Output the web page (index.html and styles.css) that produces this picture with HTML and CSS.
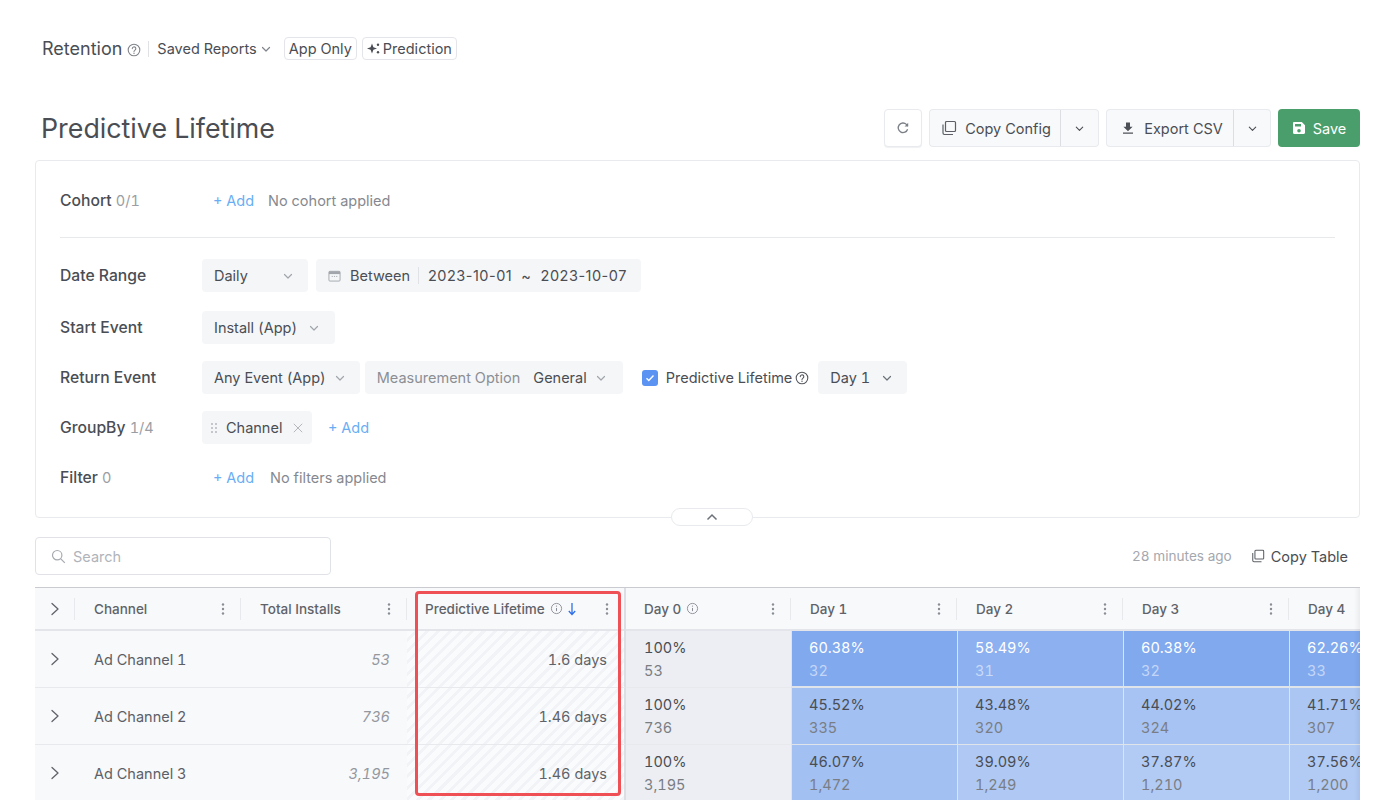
FILE: index.html
```html
<!DOCTYPE html>
<html lang="en">

<head>
    <meta charset="UTF-8">
    <meta name="viewport" content="width=device-width, initial-scale=1.0">
    <title>Predictive Lifetime</title>
    <link rel="stylesheet" href="styles.css">
</head>

<body>
    <svg class="defs" width="0" height="0">
        <symbol id="i-chev" viewBox="0 0 12 12"><path d="M2.5 4.5 6 8l3.5-3.5" fill="none" stroke="currentColor" stroke-width="1.2" stroke-linecap="round" stroke-linejoin="round"/></symbol>
        <symbol id="i-help" viewBox="0 0 14 14"><circle cx="7" cy="7" r="5.8" fill="none" stroke="currentColor" stroke-width="1.1"/><path d="M5.3 5.6a1.75 1.75 0 1 1 2.7 1.5c-.6.4-1 .7-1 1.4" fill="none" stroke="currentColor" stroke-width="1.1" stroke-linecap="round"/><circle cx="7" cy="10.2" r=".7" fill="currentColor"/></symbol>
        <symbol id="i-info" viewBox="0 0 14 14"><circle cx="7" cy="7" r="5.5" fill="none" stroke="currentColor" stroke-width="1"/><path d="M7 6.4v3.4" stroke="currentColor" stroke-width="1.1"/><circle cx="7" cy="4.4" r=".7" fill="currentColor"/></symbol>
        <symbol id="i-copy" viewBox="0 0 16 16"><rect x="4.5" y="1.5" width="10" height="10" rx="1" fill="none" stroke="currentColor" stroke-width="1.2"/><path d="M2 4.5v8.6c0 .8.6 1.4 1.4 1.4H12" fill="none" stroke="currentColor" stroke-width="1.2"/></symbol>
        <symbol id="i-more" viewBox="0 0 4 14"><circle cx="2" cy="2.5" r="1.2" fill="currentColor"/><circle cx="2" cy="7" r="1.2" fill="currentColor"/><circle cx="2" cy="11.5" r="1.2" fill="currentColor"/></symbol>
        <symbol id="i-right" viewBox="0 0 12 14"><path d="M3 1.5 9 7l-6 5.5" fill="none" stroke="currentColor" stroke-width="1.3" stroke-linecap="round" stroke-linejoin="round"/></symbol>
    </svg>

    <div class="topbar">
        <span class="topbar-title">Retention</span>
        <svg class="icon-help"><use href="#i-help"/></svg>
        <span class="topbar-sep"></span>
        <span class="saved">Saved Reports</span>
        <svg class="icon-saved"><use href="#i-chev"/></svg>
        <span class="tag tag-app">App Only</span>
        <span class="tag">
            <svg class="icon-spark" viewBox="0 0 13 13"><path d="M5 1.500 6.400 5.300 10 6.500 6.400 7.800 5 11.500 3.600 7.800 0 6.500 3.600 5.300z" fill="currentColor"/><circle cx="11" cy="2.800" r="1.200" fill="currentColor"/><circle cx="11" cy="10.200" r="1.200" fill="currentColor"/></svg>Prediction
        </span>
    </div>

    <div class="header">
        <h1>Predictive Lifetime</h1>
        <div class="actions">
            <button class="btn btn-refresh">
                <svg width="14" height="14" viewBox="0 0 14 14"><path d="M11.6 8.2A4.8 4.8 0 1 1 10.4 3.4L11.8 5" fill="none" stroke="#7b8087" stroke-width="1.3"/><path d="M12.2 1.8v3.7H8.6z" fill="#7b8087"/></svg>
            </button>
            <div class="btn-group btn-copy">
                <button class="btn btn-main"><svg class="icon-copy"><use href="#i-copy"/></svg>Copy Config</button>
                <button class="btn btn-caret"><svg class="icon-caret"><use href="#i-chev"/></svg></button>
            </div>
            <div class="btn-group btn-export">
                <button class="btn btn-main">
                    <svg class="icon-export" viewBox="0 0 14 14"><path d="M5 1.5h4v4.2h2.6L7 10.2 2.4 5.7H5zM2 11.4h10v1.4H2z" fill="#4d5157"/></svg>Export CSV
                </button>
                <button class="btn btn-caret"><svg class="icon-caret"><use href="#i-chev"/></svg></button>
            </div>
            <button class="btn btn-save">
                <svg class="icon-save" viewBox="0 0 14 14"><path d="M2.2 1h7.6L13 4.2v7.6c0 .7-.5 1.2-1.2 1.2H2.2C1.500 13 1 12.500 1 11.800V2.200C1 1.500 1.500 1 2.200 1zM3 3v2.600h6V3zm4 5.000a1.800 1.800 0 1 0 0 3.600 1.800 1.800 0 0 0 0-3.600z" fill="#fff" fill-rule="evenodd"/></svg>Save
            </button>
        </div>
    </div>

    <div class="panel">
        <div class="row row-cohort">
            <div class="row-label">Cohort <span class="count">0/1</span></div>
            <span class="add">+ Add</span>
            <span class="none">No cohort applied</span>
        </div>
        <div class="divider"></div>
        <div class="row row-date">
            <div class="row-label">Date Range</div>
            <div class="pill pill-daily">Daily<svg class="icon-pill"><use href="#i-chev"/></svg></div>
            <div class="pill pill-date">
                <svg class="icon-cal" viewBox="0 0 14 14"><path d="M2 2.500h10c.6 0 1 .4 1 1V12c0 .6-.4 1-1 1H2c-.6 0-1-.4-1-1V3.500c0-.6.4-1 1-1z" fill="none" stroke="#a2a6ac" stroke-width="1"/><path d="M1 2.500h12v3H1z" fill="#a2a6ac"/><path d="M4 8h1.200M6.400 8h1.200M8.800 8H10" stroke="#a2a6ac"/></svg>
                <span class="date-mode">Between</span>
                <span class="date-value">2023-10-01 &nbsp;~&nbsp; 2023-10-07</span>
            </div>
        </div>
        <div class="row">
            <div class="row-label">Start Event</div>
            <div class="pill pill-start">Install (App)<svg class="icon-pill"><use href="#i-chev"/></svg></div>
        </div>
        <div class="row">
            <div class="row-label">Return Event</div>
            <div class="pill">Any Event (App)<svg class="icon-pill"><use href="#i-chev"/></svg></div>
            <div class="pill pill-measure"><span class="muted">Measurement Option</span>General<svg class="icon-pill"><use href="#i-chev"/></svg></div>
            <span class="check">
                <svg width="10" height="8" viewBox="0 0 10 8"><path d="M1.500 4.200 3.800 6.400 8.500 1.500" fill="none" stroke="#fff" stroke-width="1.400"/></svg>
            </span>
            <span class="check-label">Predictive Lifetime</span>
            <svg class="icon-help-dark"><use href="#i-help"/></svg>
            <div class="pill pill-day">Day 1<svg class="icon-pill icon-dark"><use href="#i-chev"/></svg></div>
        </div>
        <div class="row">
            <div class="row-label">GroupBy <span class="count">1/4</span></div>
            <div class="pill pill-group">
                <svg class="icon-drag" viewBox="0 0 6 10"><g fill="#c4c8cd"><rect width="2" height="2"/><rect x="4" width="2" height="2"/><rect y="4" width="2" height="2"/><rect x="4" y="4" width="2" height="2"/><rect y="8" width="2" height="2"/><rect x="4" y="8" width="2" height="2"/></g></svg>
                Channel
                <svg class="icon-x" viewBox="0 0 10 10"><path d="M.8.8l8.400 8.400M9.200.8.800 9.200" stroke="#b4b8bd" stroke-width="1"/></svg>
            </div>
            <span class="add add-group">+ Add</span>
        </div>
        <div class="row">
            <div class="row-label">Filter <span class="count">0</span></div>
            <span class="add">+ Add</span>
            <span class="none none-filter">No filters applied</span>
        </div>
        <button class="collapse">
            <svg width="12" height="8" viewBox="0 0 12 8"><path d="M1.500 6.500 6 2l4.500 4.500" fill="none" stroke="#6d7278" stroke-width="1.500"/></svg>
        </button>
    </div>

    <div class="toolbar">
        <div class="search">
            <svg width="15" height="15" viewBox="0 0 15 15"><circle cx="6.200" cy="6.200" r="4.700" fill="none" stroke="#a6aab0" stroke-width="1.200"/><path d="m9.800 9.800 4 4" stroke="#a6aab0" stroke-width="1.200"/></svg>
            Search
        </div>
        <div class="toolbar-right">
            <span class="ago">28 minutes ago</span>
            <svg class="icon-copy-sm"><use href="#i-copy"/></svg>
            <span class="copy-table">Copy Table</span>
        </div>
    </div>

    <div class="table">
        <div class="table-row table-head">
            <div class="th th-expand"><svg class="icon-right"><use href="#i-right"/></svg></div>
            <div class="th">Channel<svg class="icon-more"><use href="#i-more"/></svg></div>
            <div class="th">Total Installs<svg class="icon-more"><use href="#i-more"/></svg></div>
            <div class="th th-pl">Predictive Lifetime<svg class="icon-info"><use href="#i-info"/></svg>
                <svg class="icon-sort" viewBox="0 0 10 14"><path d="M5 1v11M1.800 9 5 12.500 8.200 9" fill="none" stroke="#2f6fe8" stroke-width="1.300"/></svg>
                <svg class="icon-more"><use href="#i-more"/></svg></div>
            <div class="th th-day">Day 0<svg class="icon-info"><use href="#i-info"/></svg><svg class="icon-more"><use href="#i-more"/></svg></div>
            <div class="th">Day 1<svg class="icon-more"><use href="#i-more"/></svg></div>
            <div class="th">Day 2<svg class="icon-more"><use href="#i-more"/></svg></div>
            <div class="th">Day 3<svg class="icon-more"><use href="#i-more"/></svg></div>
            <div class="th th-last">Day 4</div>
        </div>

        <div class="table-row">
            <div class="td td-expand"><svg class="icon-right"><use href="#i-right"/></svg></div>
            <div class="td td-name">Ad Channel 1</div>
            <div class="td td-total">53</div>
            <div class="td td-pl">1.6 days</div>
            <div class="td td-zero">100%<small>53</small></div>
            <div class="td heat heat-a">60.38%<small>32</small></div>
            <div class="td heat heat-b">58.49%<small>31</small></div>
            <div class="td heat heat-a">60.38%<small>32</small></div>
            <div class="td heat heat-a">62.26%<small>33</small></div>
        </div>
        <div class="table-row">
            <div class="td td-expand"><svg class="icon-right"><use href="#i-right"/></svg></div>
            <div class="td td-name">Ad Channel 2</div>
            <div class="td td-total">736</div>
            <div class="td td-pl">1.46 days</div>
            <div class="td td-zero">100%<small>736</small></div>
            <div class="td heat heat-c">45.52%<small>335</small></div>
            <div class="td heat heat-d">43.48%<small>320</small></div>
            <div class="td heat heat-d">44.02%<small>324</small></div>
            <div class="td heat heat-e">41.71%<small>307</small></div>
        </div>
        <div class="table-row">
            <div class="td td-expand"><svg class="icon-right"><use href="#i-right"/></svg></div>
            <div class="td td-name">Ad Channel 3</div>
            <div class="td td-total">3,195</div>
            <div class="td td-pl">1.46 days</div>
            <div class="td td-zero">100%<small>3,195</small></div>
            <div class="td heat heat-c">46.07%<small>1,472</small></div>
            <div class="td heat heat-f">39.09%<small>1,249</small></div>
            <div class="td heat heat-g">37.87%<small>1,210</small></div>
            <div class="td heat heat-g">37.56%<small>1,200</small></div>
        </div>

        <div class="table-fade"></div>
        <div class="highlight"></div>
    </div>
</body>

</html>
```

FILE: styles.css
```css
* {
    box-sizing: border-box;
}

html, body {
    height: 800px;
    overflow: hidden;
}

body {
    font-family: Inter, "Noto Sans", sans-serif;
    font-size: 14.5px;
    font-variant-numeric: tabular-nums;
    color: #4a4e54;
    margin: 0;
    padding: 37px 40px 0 35px;
    background-color: #fff;
}

.defs {
    position: absolute;
}

svg {
    flex: none;
}

/* top bar */
.topbar {
    display: flex;
    align-items: center;
    height: 23px;
    padding-left: 7px;
}

.topbar-title {
    font-size: 18px;
}

.icon-help {
    width: 14px;
    height: 14px;
    margin: 2px 0 0 5px;
    color: #80858b;
}

.topbar-sep {
    width: 1px;
    height: 16px;
    margin: 0 8px 0 7px;
    background-color: #dfe1e4;
}

.icon-saved {
    width: 12px;
    height: 12px;
    margin: 0 12px 0 3px;
    color: #80858b;
}

.tag {
    display: flex;
    align-items: center;
    height: 23px;
    margin-right: 5px;
    padding: 0 4px 0 4px;
    border: 1px solid #e3e5ea;
    border-radius: 4px;
    color: #4a4e54;
}

.icon-spark {
    width: 13px;
    height: 13px;
    margin-right: 3px;
}

/* title and buttons */
.header {
    display: flex;
    justify-content: space-between;
    align-items: center;
    height: 38px;
    margin-top: 49px;
    padding-left: 6px;
}

h1 {
    margin: 0;
    font-size: 26.8px;
    font-weight: 400;
    color: #4a4e54;
}

.actions {
    display: flex;
    gap: 7px;
}

.btn {
    display: flex;
    align-items: center;
    justify-content: center;
    height: 38px;
    padding: 0;
    border: 1px solid #e8eaee;
    border-radius: 4px;
    background-color: #f8f9fb;
    color: #4a4e54;
    font-family: inherit;
    font-size: 14.5px;
}

.btn-refresh {
    width: 38px;
    background-color: #fff;
    box-shadow: 0 1px 1px #f0f1f3;
}

.btn-group {
    display: flex;
}

.btn-main {
    border-radius: 4px 0 0 4px;
}

.btn-caret {
    width: 38px;
    border-left: 0;
    border-radius: 0 4px 4px 0;
    position: relative;
}

.btn-copy .btn-main {
    width: 132px;
    padding-left: 2px;
    border-right: 1px solid #dcdee2;
}

.btn-export .btn-main {
    width: 128px;
    padding-left: 4px;
    border-right: 1px solid #dcdee2;
}

.btn-export .btn-caret {
    width: 37px;
}

.icon-copy {
    width: 16px;
    height: 16px;
    margin-right: 8px;
    color: #5c6066;
}

.icon-export {
    width: 14px;
    height: 14px;
    margin-right: 9px;
}

.icon-caret {
    width: 11px;
    height: 11px;
    color: #4a4e54;
}

.btn-save {
    width: 82px;
    border: 0;
    background-color: #4a9e6b;
    color: #fff;
}

.icon-save {
    width: 14px;
    height: 14px;
    margin-right: 7px;
}

/* filter panel */
.panel {
    position: relative;
    height: 358px;
    margin-top: 13px;
    padding: 23px 24px 0;
    border: 1px solid #e8eaed;
    border-radius: 4px;
}

.row {
    display: flex;
    align-items: center;
    height: 33px;
    margin-bottom: 17px;
}

.row-cohort {
    margin-bottom: 19px;
}

.row-date {
    margin-bottom: 19px;
}

.row-label {
    width: 142px;
    flex: none;
    font-size: 15.7px;
    font-weight: 500;
}

.count {
    color: #9a9ea4;
    font-weight: 400;
    font-size: 14.5px;
}

.add {
    margin-left: 11px;
    color: #69aef5;
}

.none {
    margin-left: 14px;
    color: #85898f;
}

.none-filter {
    margin-left: 16px;
}

.divider {
    height: 1px;
    margin-bottom: 21px;
    margin-top: 20px;
    background-color: #e8e9eb;
}

.pill {
    display: flex;
    align-items: center;
    height: 33px;
    padding: 0 14px 0 12px;
    border-radius: 4px;
    background-color: #f5f6f8;
    white-space: nowrap;
}

.icon-pill {
    width: 12px;
    height: 12px;
    margin-left: 8px;
    color: #a2a6ac;
}

.icon-dark {
    color: #6d7278;
    margin-left: 11px;
}

.pill-daily {
    justify-content: space-between;
    width: 106px;
    padding-right: 14px;
}

.pill-date {
    margin-left: 8px;
    padding-right: 14px;
}

.date-value {
    font-variant-numeric: normal;
    letter-spacing: 0.5px;
}

.icon-cal {
    width: 13px;
    height: 13px;
    margin-right: 9px;
}

.date-mode {
    margin-right: 9px;
    padding-right: 8px;
    border-right: 1px solid #e0e2e5;
}

.pill-start {
    padding-right: 15px;
}

.pill-start .icon-pill {
    margin-left: 11px;
}

.pill-measure {
    margin-left: 5px;
    padding-right: 16px;
}

.muted {
    margin-right: 13px;
    color: #8b8f95;
}

.check {
    display: flex;
    align-items: center;
    justify-content: center;
    width: 16px;
    height: 16px;
    margin: 0 8px 0 19px;
    border-radius: 3px;
    background-color: #5b93f2;
}

.icon-help-dark {
    width: 14px;
    height: 14px;
    margin: 1px 9px 0 3px;
    color: #55595f;
}

.pill-group {
    width: 110px;
    padding: 0 9px;
}

.icon-drag {
    width: 6px;
    height: 10px;
    margin-right: 9px;
}

.icon-x {
    width: 10px;
    height: 10px;
    margin-left: 11px;
}

.add-group {
    margin-left: 16px;
}

.collapse {
    position: absolute;
    left: 635px;
    bottom: -9px;
    display: flex;
    align-items: center;
    justify-content: center;
    width: 82px;
    height: 18px;
    padding: 0;
    border: 1px solid #e8eaed;
    border-radius: 9px;
    background-color: #fff;
}

/* search line */
.toolbar {
    display: flex;
    justify-content: space-between;
    align-items: center;
    margin-top: 19px;
}

.search {
    display: flex;
    align-items: center;
    gap: 7px;
    width: 296px;
    height: 38px;
    padding-left: 15px;
    border: 1px solid #e0e2e8;
    border-radius: 4px;
    color: #b0b4ba;
}

.toolbar-right {
    display: flex;
    align-items: center;
    padding-right: 12px;
}

.ago {
    margin-right: 19px;
    font-size: 13.6px;
    color: #a4a8ae;
}

.icon-copy-sm {
    width: 14px;
    height: 14px;
    margin-right: 6px;
    color: #5c6066;
}

/* table */
.table {
    position: relative;
    height: 213px;
    margin-top: 12px;
    overflow: hidden;
    border-top: 1px solid #c9cbd0;
}

.table-row {
    display: grid;
    grid-template-columns: 40px 166px 166px 219px 165px 166px 166px 166px 166px;
    width: 1400px;
    height: 57px;
}

.table-head {
    height: 43px;
}

.th {
    position: relative;
    display: flex;
    align-items: center;
    padding-left: 19px;
    background-color: #f8f9fb;
    border-bottom: 2px solid #e3e5ea;
    font-size: 13.5px;
    font-weight: 500;
    color: #5f6369;
}

.th::after {
    content: "";
    position: absolute;
    top: 10px;
    right: 0;
    width: 1px;
    height: 22px;
    background-color: #e8e9ec;
}

.th-expand {
    justify-content: center;
    padding-left: 0;
}

.th-pl {
    padding-left: 18px;
}

.th-pl .icon-more {
    right: 17px;
}

.th-pl::after {
    top: 0;
    height: 43px;
    width: 2px;
    background-color: #dcdee3;
}

.th-day {
    padding-left: 18px;
}

.th-last::after {
    display: none;
}

.icon-more {
    position: absolute;
    right: 16px;
    width: 4px;
    height: 14px;
    color: #8a8e94;
}

.icon-info {
    width: 13px;
    height: 13px;
    margin-left: 5px;
    color: #8a8e94;
}

.icon-sort {
    width: 10px;
    height: 14px;
    margin-left: 4px;
}

.icon-right {
    width: 12px;
    height: 14px;
    color: #5f6369;
}

.td {
    display: flex;
    align-items: center;
    background-color: #f8f9fb;
    border-bottom: 1px solid #e8e9ec;
    white-space: nowrap;
    overflow: hidden;
}

.td-expand {
    justify-content: center;
}

.td-name {
    padding-left: 19px;
    color: #5c6066;
}

.td-total {
    justify-content: flex-end;
    padding-right: 17px;
    font-style: italic;
    color: #94989e;
}

.td-pl {
    justify-content: flex-end;
    padding: 0 17px 0 0;
    border-right: 2px solid #dcdee3;
    background-color: #fafbfc;
    background-image: repeating-linear-gradient(135deg, transparent 0 5px, #f2f3f6 5px 8px);
    color: #5f6369;
}

.td-zero,
.heat {
    flex-direction: column;
    align-items: flex-start;
    justify-content: center;
    gap: 4px;
    padding-left: 18px;
    line-height: 19px;
}

.td-zero {
    background-color: #eceef3;
}

.td small {
    font-size: 14.5px;
    color: #7a7e84;
}

.heat {
    border-left: 1px solid #dfe3ea;
    border-bottom: 1px solid #dfe3ea;
    padding-left: 17px;
}

.heat-a { background-color: #81a9ee; color: #fff; border-bottom-width: 2px; }
.heat-a small { color: #c4d6f6; }
.heat-b { background-color: #8cb0f0; color: #fff; border-bottom-width: 2px; }
.heat-b small { color: #c9daf7; }
.heat-c { background-color: #a2c0f2; }
.heat-d { background-color: #a7c3f3; }
.heat-e { background-color: #abc6f3; }
.heat-f { background-color: #afc9f4; }
.heat-g { background-color: #b2cbf5; }

.table-fade {
    position: absolute;
    top: 0;
    right: 0;
    width: 6px;
    height: 100%;
    background-image: linear-gradient(to right, transparent, rgba(0, 0, 0, 0.05));
}

.highlight {
    position: absolute;
    top: 3px;
    left: 380px;
    width: 206px;
    height: 205px;
    border: 3px solid #ee5055;
    border-radius: 4px;
}
```
